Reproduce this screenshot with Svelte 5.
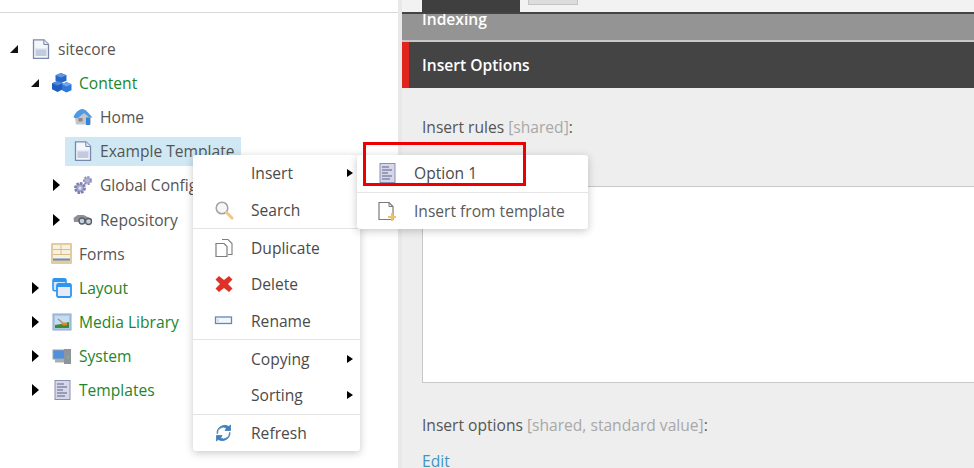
<script>
  const tree = [
    { label: 'sitecore', depth: 0, arrow: 'open', icon: 'page' },
    { label: 'Content', depth: 1, arrow: 'open', icon: 'cubes', green: true },
    { label: 'Home', depth: 2, icon: 'home' },
    { label: 'Example Template', depth: 2, icon: 'page', selected: true },
    { label: 'Global Configuration', depth: 2, arrow: 'closed', icon: 'gears' },
    { label: 'Repository', depth: 2, arrow: 'closed', icon: 'binoculars' },
    { label: 'Forms', depth: 1, icon: 'forms' },
    { label: 'Layout', depth: 1, arrow: 'closed', icon: 'layout', green: true },
    { label: 'Media Library', depth: 1, arrow: 'closed', icon: 'media', green: true },
    { label: 'System', depth: 1, arrow: 'closed', icon: 'system', green: true },
    { label: 'Templates', depth: 1, arrow: 'closed', icon: 'templates', green: true }
  ];
  const menu = [
    [{ label: 'Insert', sub: true }, { label: 'Search', icon: 'search' }],
    [{ label: 'Duplicate', icon: 'duplicate' }, { label: 'Delete', icon: 'delete' }, { label: 'Rename', icon: 'rename' }],
    [{ label: 'Copying', sub: true }, { label: 'Sorting', sub: true }],
    [{ label: 'Refresh', icon: 'refresh' }]
  ];
</script>

{#snippet icon(name)}
  <svg class="icon" viewBox="0 0 20 20" width="20" height="20" aria-hidden="true">
    {#if name === 'page'}
      <path d="M2.500 0.800h10.500l4.500 4.500v14H2.500z" fill="#f4f6fb" stroke="#7a88ac" stroke-width="1.300"/>
      <path d="M12.800 0.800v4.700h4.700" fill="#dfe4f0" stroke="#7a88ac"/>
      <rect x="4.500" y="9" width="11" height="8" fill="#c2cae0"/>
      <rect x="4.500" y="9" width="11" height="1.500" fill="#e4e8f2"/>
    {:else if name === 'cubes'}
      <path d="M9 0l5.500 2.300v5.400L9 10 3.500 7.700V2.300z" fill="#2a66c8"/>
      <path d="M9 0l5.500 2.300L9 4.600 3.500 2.300z" fill="#5c9ae8"/>
      <path d="M5.500 8l5.500 2.300v6L5.500 19 0 16.300v-6z" fill="#1f5cc0"/>
      <path d="M5.500 8l5.500 2.300-5.500 2.300L0 10.300z" fill="#4b8ae0"/>
      <path d="M14.500 9l5 2.200v6L14.500 19.500 10 17.200v-6z" fill="#2f78d8"/>
      <path d="M14.500 9l5 2.200-5 2.200-4.500-2.200z" fill="#6aa8f0"/>
    {:else if name === 'home'}
      <path d="M2 11l3-5h10l3 5v6.500H3z" fill="#c4c6ca"/>
      <path d="M0.500 10.500C2 6 5 2.500 9.500 2c1.500 0 3 1 4 2l6 6.500h-3L11 6 5 11H2z" fill="#4f9ae4"/>
      <rect x="5.500" y="11" width="4" height="3.500" fill="#85898f"/>
      <rect x="13" y="10.500" width="4" height="7.500" fill="#2f86dc"/>
    {:else if name === 'gears'}
      <circle cx="7" cy="13" r="4.600" fill="#a6a8d0" stroke="#7f81b4" stroke-width="2.800" stroke-dasharray="2.500 1"/>
      <circle cx="7" cy="13" r="1.500" fill="#e6e6f2"/>
      <circle cx="14.500" cy="5.500" r="3.300" fill="#b2b4d6" stroke="#8f91bc" stroke-width="2.400" stroke-dasharray="2 1"/>
    {:else if name === 'binoculars'}
      <path d="M0.500 8l4-3h6l8.500 4v3l-18 0z" fill="#8d9094"/>
      <circle cx="9" cy="11" r="3" fill="#c4d2de" stroke="#5a6068" stroke-width="1.400"/>
      <circle cx="15.500" cy="11.500" r="3" fill="#c4d2de" stroke="#5a6068" stroke-width="1.400"/>
    {:else if name === 'forms'}
      <rect x="-1" y="-1" width="21" height="21" rx="1" fill="#e2cb9c"/>
      <rect x="1" y="1" width="17" height="15" fill="#f7f1e2"/>
      <path d="M1 5.500h17M1 10.500h17M9 1v4.500M9 5.500v5" stroke="#d8bd86" fill="none"/>
      <rect x="1" y="14.500" width="17" height="2" fill="#6f8bb4"/>
    {:else if name === 'layout'}
      <rect x="1" y="0.800" width="13" height="12" rx="1.500" fill="#d5e6fb" stroke="#2e96f0" stroke-width="1.600"/>
      <rect x="1" y="1" width="13" height="3" fill="#2e96f0"/>
      <rect x="5" y="6" width="14" height="13" rx="1.500" fill="#e6ebf7" stroke="#2e96f0" stroke-width="1.800"/>
      <rect x="5" y="6" width="14" height="3" fill="#2e96f0"/>
    {:else if name === 'media'}
      <rect x="1" y="2" width="18" height="16" fill="#a9c7e8" stroke="#8fa8ca"/>
      <rect x="3" y="4" width="14" height="12" fill="#c6dcf0"/>
      <path d="M3 16v-3l6-1 8-2v6z" fill="#3e8a36"/>
      <path d="M6 7l6 5" stroke="#a89070" stroke-width="1.300"/>
      <ellipse cx="12.500" cy="12" rx="2.800" ry="1.600" fill="#e88428"/>
    {:else if name === 'system'}
      <rect x="1" y="4" width="13" height="9" fill="#4f90dc" stroke="#9aa2ad"/>
      <rect x="3" y="13" width="9" height="3.500" fill="#a9aeb5"/>
      <rect x="12" y="3" width="7" height="15" fill="#8d949d"/>
      <rect x="15" y="10" width="2" height="3" fill="#7cb86a"/>
    {:else if name === 'templates'}
      <rect x="3" y="0.500" width="15" height="19" fill="#d6d8ea" stroke="#8c8fb4"/>
      <path d="M5 4h7M5 7h10M5 10h6M5 13h10M5 16h8" stroke="#5d6185" stroke-width="1.200"/>
    {:else if name === 'search'}
      <circle cx="8" cy="8" r="5.800" fill="#f6f6f6" stroke="#a2a2a2" stroke-width="1.500"/>
      <path d="M12.500 12.500l5.500 5.500" stroke="#eec88a" stroke-width="3" stroke-linecap="round"/>
    {:else if name === 'duplicate'}
      <path d="M8 1.500h6l4 4v11h-4" fill="#fff" stroke="#7d7d7d" stroke-width="1.100"/>
      <path d="M2 5.500h8l3 3v10H2z" fill="#fff" stroke="#7d7d7d" stroke-width="1.200"/>
    {:else if name === 'delete'}
      <path d="M5 2l5 4 5-4 3.500 3.500-4.500 4.500 4.500 4.500-3.500 3.500-5-4-5 4-3.500-3.500 4.500-4.500-4.500-4.500z" fill="#e03128"/>
    {:else if name === 'rename'}
      <rect x="1.500" y="6" width="16" height="6.500" fill="#f4f6fa" stroke="#5b8abf" stroke-width="1.300"/>
      <path d="M4 8v3" stroke="#b9c2d0"/>
    {:else if name === 'refresh'}
      <path d="M3.500 10.500a6 6 0 0 1 9-5.500l-1.500 2.500h5.500V2l-1.700 1.500A7.800 7.800 0 0 0 3 10.500z" fill="#3f7fbd" stroke="#3f7fbd" stroke-width="0.800"/>
      <path d="M15.500 9.500a6 6 0 0 1-9 5.500l1.500-2.500H2.500V18l1.700-1.500A7.800 7.800 0 0 0 16 9.500z" fill="#3f7fbd" stroke="#3f7fbd" stroke-width="0.800"/>
    {:else if name === 'insert-template'}
      <path d="M2 1.500h10l4 4v13H2z" fill="#fff" stroke="#7b7b7b" stroke-width="1.200"/>
      <path d="M12 1.500v4h4" fill="none" stroke="#7b7b7b"/>
      <path d="M11 15h3v-3h2v3h3v2h-3v3h-2v-3h-3z" fill="#eec06a"/>
    {/if}
  </svg>
{/snippet}

<div class="page">
  <aside class="left">
    <div class="topline"></div>
    <ul class="tree">
      {#each tree as row}
        <li class="row d{row.depth}">
          <span class="arrow-slot">
            {#if row.arrow === 'open'}<span class="tri-open"></span>{/if}
            {#if row.arrow === 'closed'}<span class="tri-closed"></span>{/if}
          </span>
          <span class="node" class:selected={row.selected} class:green={row.green}>
            {@render icon(row.icon)}
            <span>{row.label}</span>
          </span>
        </li>
      {/each}
    </ul>
  </aside>

  <div class="splitter"></div>

  <main class="right">
    <div class="tabs">
      <div class="tab"></div>
      <div class="tabbtn"></div>
    </div>
    <div class="section collapsed">Indexing</div>
    <div class="section active">Insert Options</div>
    <div class="fields">
      <div class="label first">Insert rules <span class="meta">[shared]</span>:</div>
      <div class="box"></div>
      <div class="label second">Insert options <span class="meta">[shared, standard value]</span>:</div>
      <div class="edit">Edit</div>
    </div>
  </main>

  <div class="menu ctx">
    {#each menu as group, i}
      {#if i > 0}<div class="sep"></div>{/if}
      {#each group as item}
        <div class="item">
          <span class="mi">{#if item.icon}{@render icon(item.icon)}{/if}</span>
          <span class="mt">{item.label}</span>
          {#if item.sub}<span class="tri-closed small"></span>{/if}
        </div>
      {/each}
    {/each}
  </div>

  <div class="menu sub">
    <div class="item">
      <span class="mi">{@render icon('templates')}</span>
      <span class="mt">Option 1</span>
    </div>
    <div class="sep"></div>
    <div class="item">
      <span class="mi">{@render icon('insert-template')}</span>
      <span class="mt light">Insert from template</span>
    </div>
  </div>

  <div class="redbox"></div>
</div>

<style>
  :global(body) { margin: 0; background: #fff; }
  .page {
    position: relative;
    display: flex;
    width: 974px;
    height: 468px;
    overflow: hidden;
    font-family: "Open Sans", sans-serif;
    font-size: 15.600px;
    color: #555;
  }
  .left { width: 398px; flex: none; background: #fff; }
  .topline { height: 12px; border-bottom: 1px solid #d9d9d9; }
  .tree { list-style: none; margin: 19px 0 0; padding: 0; }
  .row { display: flex; align-items: center; height: 34.100px; }
  .arrow-slot { width: 14px; flex: none; display: flex; align-items: center; justify-content: center; margin-right: 5px; }
  .d0 { padding-left: 7px; }
  .d1 { padding-left: 28px; }
  .d2 { padding-left: 49px; }
  .tri-open {
    width: 0; height: 0;
    border-bottom: 8px solid #111;
    border-left: 8px solid transparent;
  }
  .tri-closed {
    width: 0; height: 0;
    border-left: 7px solid #000;
    border-top: 6px solid transparent;
    border-bottom: 6px solid transparent;
  }
  .tri-closed.small {
    border-left-width: 6px;
    border-top-width: 4.500px;
    border-bottom-width: 4.500px;
    margin-left: auto;
    margin-right: 7px;
  }
  .node { display: flex; align-items: center; gap: 7px; height: 29px; padding: 0 7px 0 0; white-space: nowrap; }
  .d0 .node { padding-left: 5px; }
  .d1 .node { padding-left: 5px; }
  .d2 .node { margin-left: -3px; padding-left: 8px; }
  .selected { background: #cfe8f4; }
  .green { color: #19872b; }
  .icon { flex: none; display: block; overflow: visible; }
  .splitter { width: 4px; flex: none; background: #e8e8e8; }
  .right { flex: 1; min-width: 0; background: #eee; }
  .tabs { height: 12px; display: flex; align-items: flex-start; gap: 8px; padding-left: 20px; background: #f2f2f2; }
  .tab { width: 98px; height: 12px; background: #3f3f3f; }
  .tabbtn { width: 48px; height: 4px; background: #dcdcdc; border: 1px solid #c4c4c4; border-top: 0; }
  .section { color: #fff; font-weight: 600; padding-left: 20px; display: flex; align-items: center; }
  .collapsed { height: 26px; background: #949494; border-top: 2px solid #444; border-bottom: 2px solid #c8c8c8; align-items: flex-start; line-height: 10px; overflow: hidden; }
  .active { height: 46px; background: #444; border-left: 7px solid #e0261c; padding-left: 13px; }
  .fields { padding: 29px 0 0 20px; }
  .label { color: #555; line-height: 20px; white-space: nowrap; }
  .meta { color: #a8a8a8; }
  .box { height: 195px; margin-top: 49px; background: #fff; border: 1px solid #c8c8c8; border-right: 0; }
  .second { margin-top: 32px; }
  .edit { color: #3f95c4; margin-top: 16px; line-height: 20px; }
  .menu {
    position: absolute;
    background: #fff;
    border-radius: 3px;
    box-shadow: 0 2px 8px rgba(0,0,0,.22);
    color: #4a4a4a;
  }
  .ctx { left: 193px; top: 155px; width: 167px; height: 296px; }
  .sub { left: 357px; top: 155px; width: 231px; height: 74px; }
  .item { display: flex; align-items: center; height: 36.700px; white-space: nowrap; }
  .mi { width: 20px; height: 20px; flex: none; margin: 0 17px 0 21px; }
  .sub .mi { margin: 0 17px 0 20px; }
  .mt { flex: none; }
  .light { color: #5a5a5a; }
  .sep { height: 1px; background: #e4e4e4; }
  .redbox {
    position: absolute;
    left: 363px; top: 142px;
    width: 157px; height: 38px;
    border: 3px solid #ee0000;
  }
</style>
